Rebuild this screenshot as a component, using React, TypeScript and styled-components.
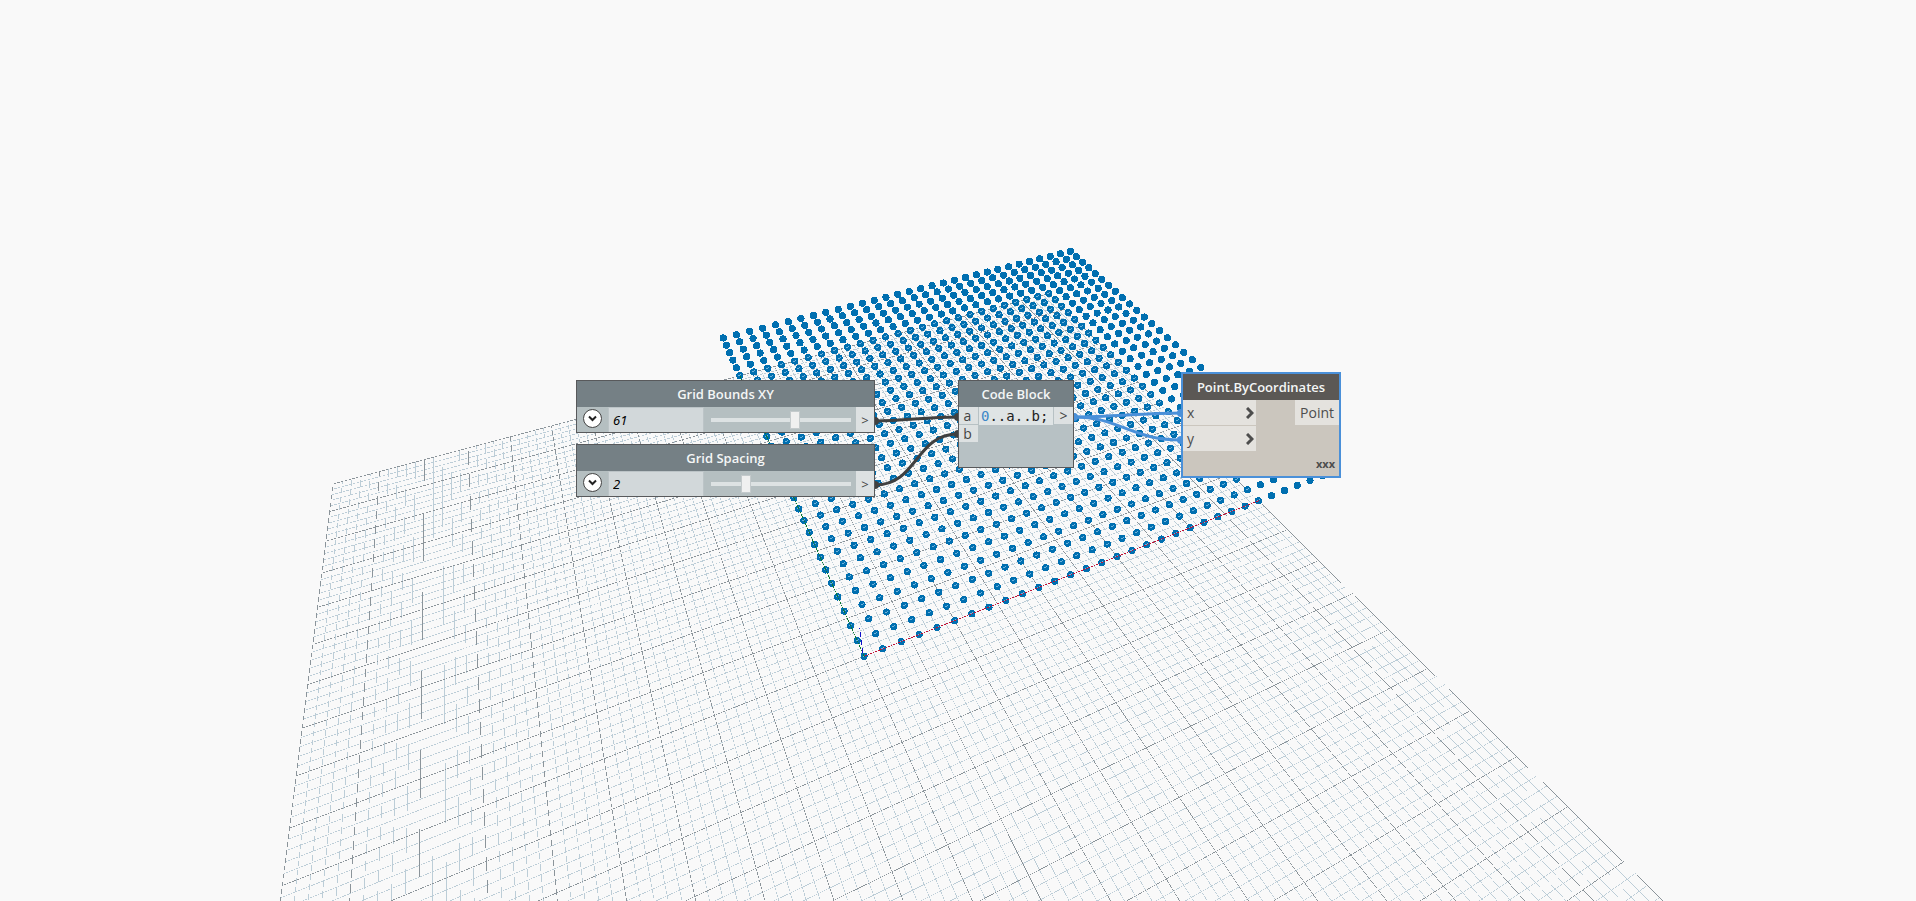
import React from 'react';
import styled, { createGlobalStyle, css } from 'styled-components';

const GlobalStyle = createGlobalStyle`
  * { box-sizing: border-box; }
  body {
    margin: 0;
    background: #f9f9f9;
    font-family: 'Open Sans', 'Noto Sans', sans-serif;
    overflow: hidden;
  }
`;

const Workspace = styled.main`
  position: relative;
  width: 100%;
  height: 100vh;
  overflow: hidden;
`;

const Scene = styled.svg`
  position: absolute;
  inset: 0;
  width: 100%;
  height: 100%;
`;

const Node = styled.section<{ $x: number; $y: number; $w: number; $selected?: boolean }>`
  position: absolute;
  left: ${p => p.$x}px;
  top: ${p => p.$y}px;
  width: ${p => p.$w}px;
  border: 1px solid #58595b;
  background: #b7c1c4;
  color: #333;
  font-size: 14px;
  ${p => p.$selected && css`
    border: 2px solid #4a90d9;
    background: #cbc6be;
  `}
`;

const Title = styled.h2<{ $selected?: boolean }>`
  margin: 0;
  height: 26px;
  line-height: 26px;
  text-align: center;
  font-size: 13px;
  font-weight: 600;
  color: #f4f6f6;
  background: ${p => (p.$selected ? '#5b5855' : '#758085')};
`;

const SliderRow = styled.div`
  display: grid;
  grid-template-columns: 31px 96px 1fr 18px;
  height: 25px;
  background: #b5bfc1;
`;

const Toggle = styled.button`
  width: 19px;
  height: 19px;
  margin: 2px 6px;
  padding: 0;
  display: grid;
  place-items: center;
  border: 1px solid #444;
  border-radius: 50%;
  background: #fff;
  color: #222;
`;

const ValueInput = styled.input`
  width: 100%;
  height: 25px;
  padding: 0 4px;
  border: 1px solid #bcc4c7;
  border-width: 1px 1px 0 1px;
  background: #d2d8da;
  font: italic 13px 'Noto Sans', sans-serif;
  color: #000;
`;

const Range = styled.input`
  appearance: none;
  margin: 0 5px 0 7px;
  height: 25px;
  background: transparent;
  &::-webkit-slider-runnable-track {
    height: 4px;
    background: #dde2e3;
  }
  &::-webkit-slider-thumb {
    appearance: none;
    width: 10px;
    height: 18px;
    margin-top: -7px;
    border: 1px solid #c4cacc;
    background: #f0f0f0;
  }
`;

const OutPort = styled.div`
  display: grid;
  place-items: center;
  background: #dde1e2;
  color: #444;
  font-size: 13px;
`;

const CodeBody = styled.div`
  display: grid;
  grid-template-columns: 19px 1fr 19px;
  column-gap: 1px;
  height: 60px;
  align-items: start;
`;

const PortList = styled.div`
  display: grid;
  row-gap: 1px;
`;

const CodePort = styled.div<{ $out?: boolean }>`
  height: 17px;
  padding-right: ${p => (p.$out ? 0 : 2)}px;
  line-height: 17px;
  text-align: center;
  background: #dde1e2;
  color: #444;
`;

const Code = styled.code`
  height: 18px;
  padding-left: 2px;
  background: #dfe4e5;
  font: 14px/18px 'DejaVu Sans Mono', monospace;
  color: #222;
`;

const Digit = styled.span`
  color: #3a87c8;
`;

const PointBody = styled.div`
  display: flex;
  justify-content: space-between;
`;

const InPorts = styled.div`
  display: grid;
  row-gap: 1px;
  width: 73px;
`;

const InPort = styled.div`
  display: flex;
  align-items: center;
  justify-content: space-between;
  height: 25px;
  padding: 0 2px 0 4px;
  background: #e4e2de;
  color: #4d4d4d;
`;

const PointOut = styled.div`
  height: 25px;
  line-height: 26px;
  padding: 0 5px;
  background: #e4e2de;
  color: #4d4d4d;
`;

const Lacing = styled.div`
  padding: 4px 4px 0;
  height: 25px;
  text-align: right;
  font-size: 11px;
  font-weight: 700;
  line-height: 18px;
  color: #4d4d4d;
`;

type Pt = [number, number];

// Ground-plane coordinates and the screen positions they project to.
const anchors: { world: Pt; screen: Pt }[] = [
  { world: [0, 0], screen: [863.6, 656.6] },
  { world: [50, 0], screen: [1258.3, 500.3] },
  { world: [0, 60], screen: [723.4, 338.2] },
  { world: [60, 60], screen: [1070.4, 251.2] },
  { world: [-50, 50], screen: [332.7, 484] },
  { world: [-50, 25], screen: [313.3, 644.3] },
  { world: [-50, 0], screen: [282, 885] },
  { world: [50, -15], screen: [1351.7, 594.3] },
  { world: [50, -30], screen: [1470.7, 710] },
  { world: [50, -45], screen: [1623.3, 862.3] },
  { world: [0, -10], screen: [902.3, 742.3] },
  { world: [0, -20], screen: [948.3, 845] },
];

function solve(m: number[][]): number[] {
  const n = m.length;
  for (let c = 0; c < n; c++) {
    let p = c;
    for (let r = c + 1; r < n; r++) if (Math.abs(m[r][c]) > Math.abs(m[p][c])) p = r;
    [m[c], m[p]] = [m[p], m[c]];
    for (let r = 0; r < n; r++) {
      if (r === c) continue;
      const f = m[r][c] / m[c][c];
      for (let k = c; k <= n; k++) m[r][k] -= f * m[c][k];
    }
  }
  return m.map((row, i) => row[n] / row[i]);
}

const WORLD = 50;
const SCREEN = 1000;

// Least-squares fit of the plane-to-screen projection through the anchors.
function fitCamera(): number[] {
  const rows = anchors.flatMap(({ world, screen }) => {
    const [x, y] = world.map(n => n / WORLD);
    const [u, v] = screen.map(n => n / SCREEN);
    return [
      [x, y, 1, 0, 0, 0, -u * x, -u * y, u],
      [0, 0, 0, x, y, 1, -v * x, -v * y, v],
    ];
  });
  const normal = Array.from({ length: 8 }, (_, i) =>
    Array.from({ length: 9 }, (_, j) => rows.reduce((sum, r) => sum + r[i] * r[j], 0)),
  );
  return solve(normal);
}

const camera = fitCamera();

const project = (wx: number, wy: number): Pt => {
  const [a, b, c, d, e, f, g, h] = camera;
  const x = wx / WORLD;
  const y = wy / WORLD;
  const w = (g * x + h * y + 1) / SCREEN;
  return [(a * x + b * y + c) / w, (d * x + e * y + f) / w];
};

const LINE_WIDTH = 0.6;
const MAX_PIXEL = 2400;

// Pixel runs of an unsmoothed thin line: a pixel is lit only where the
// line covers its centre, so slanted lines break into dashes.
function rasterise([x0, y0]: Pt, [x1, y1]: Pt): string {
  const steep = Math.abs(y1 - y0) > Math.abs(x1 - x0);
  let [a0, b0, a1, b1] = steep ? [y0, x0, y1, x1] : [x0, y0, x1, y1];
  if (a0 > a1) [a0, b0, a1, b1] = [a1, b1, a0, b0];
  const slope = (b1 - b0) / (a1 - a0);
  const reach = (LINE_WIDTH * Math.sqrt(1 + slope * slope)) / 2;
  const last = Math.min(Math.floor(a1), MAX_PIXEL);
  let out = '';
  let start = 0;
  let lane = -1;
  const flush = (end: number) => {
    if (lane >= 0 && end > start) {
      out += steep ? `M${lane}.5 ${start}V${end}` : `M${start} ${lane}.5H${end}`;
    }
  };
  for (let a = Math.max(0, Math.round(a0)); a <= last; a++) {
    const b = b0 + slope * (a + 0.5 - a0);
    const cell = Math.floor(b);
    const lit = Math.abs(b - cell - 0.5) <= reach ? cell : -1;
    if (lit !== lane) {
      flush(a);
      start = a;
      lane = lit;
    }
  }
  flush(last + 1);
  return out;
}

const line = (a: Pt, b: Pt) => rasterise(project(...a), project(...b));

const HALF = 50;
const steps = Array.from({ length: 2 * HALF + 1 }, (_, i) => i - HALF);
const gridPath = (list: number[]) =>
  list.map(i => line([i, -HALF], [i, HALF]) + line([-HALF, i], [HALF, i])).join('');
const minor = gridPath(steps.filter(i => i % 5 !== 0));
const major = gridPath(steps.filter(i => i % 5 === 0));
const xAxis = line([0, 0], [HALF, 0]);
const yAxis = line([0, 0], [0, HALF]);
const zAxis = rasterise([863, 655], [859.7, 628]);

const range = Array.from({ length: 31 }, (_, i) => i * 2);
const points = range.flatMap(x => range.map(y => ({ x, y, at: project(x, y) })));
const onGrid = points.filter(p => p.x <= HALF && p.y <= HALF);
const glints = onGrid
  .map(({ at }) => `M${Math.floor(at[0]) - 1} ${Math.floor(at[1])}h2v-1h1v1h-1v1h-2z`)
  .join('');

function Background() {
  return (
    <Scene aria-hidden="true">
      <g shapeRendering="crispEdges" fill="none">
        <path d={minor} stroke="#bccdd7" />
        <path d={major} stroke="#8b949a" />
      </g>
      <g fill="#006fb0" shapeRendering="crispEdges">
        {points.map(({ x, y, at }) => (
          <circle key={`${x}-${y}`} cx={at[0]} cy={at[1]} r="3.6" />
        ))}
      </g>
      <path d={glints} fill="#6fb3dc" shapeRendering="crispEdges" />
      <g shapeRendering="crispEdges" fill="none">
        <path d={xAxis} stroke="#c01036" />
        <path d={yAxis} stroke="#0b7a2e" />
        <path d={zAxis} stroke="#1010c8" />
      </g>
      <g fill="none" stroke="#404040" strokeWidth="3">
        <path d="M875 421C905 421 925 417 958 417" />
        <path d="M875 485C918 485 915 434 958 434" />
      </g>
      <g fill="#404040">
        <circle cx="875" cy="421" r="4" />
        <circle cx="875" cy="485" r="4" />
        <circle cx="958" cy="417" r="4" />
        <circle cx="958" cy="434" r="4" />
      </g>
      <g fill="none" stroke="#4a90d9" strokeWidth="3">
        <path d="M1074 417C1110 417 1145 413 1182 413" />
        <path d="M1074 417C1120 417 1130 440 1182 440" />
      </g>
      <g fill="#4a90d9">
        <circle cx="1074" cy="417" r="4" />
        <circle cx="1181" cy="413" r="4" />
        <circle cx="1181" cy="440" r="4" />
      </g>
    </Scene>
  );
}

function DownMark() {
  return (
    <svg width="9" height="7" viewBox="0 0 9 7" fill="none" stroke="currentColor" strokeWidth="2" aria-hidden="true">
      <path d="M1 1.5L4.5 5L8 1.5" />
    </svg>
  );
}

function RightMark() {
  return (
    <svg width="8" height="12" viewBox="0 0 8 12" fill="none" stroke="currentColor" strokeWidth="3" aria-hidden="true">
      <path d="M1 1L6 6L1 11" />
    </svg>
  );
}

interface SliderNodeProps {
  title: string;
  x: number;
  y: number;
  value: number;
  position: number;
}

function SliderNode({ title, x, y, value, position }: SliderNodeProps) {
  return (
    <Node $x={x} $y={y} $w={299}>
      <Title>{title}</Title>
      <SliderRow>
        <Toggle aria-label={`${title} settings`}>
          <DownMark />
        </Toggle>
        <ValueInput aria-label={`${title} value`} defaultValue={value} />
        <Range type="range" aria-label={title} min={0} max={100} defaultValue={position} />
        <OutPort>&gt;</OutPort>
      </SliderRow>
    </Node>
  );
}

export default function App() {
  return (
    <>
      <GlobalStyle />
      <Workspace>
        <Background />
        <SliderNode title="Grid Bounds XY" x={576} y={380} value={61} position={61} />
        <SliderNode title="Grid Spacing" x={576} y={444} value={2} position={23} />
        <Node $x={958} $y={380} $w={116}>
          <Title>Code Block</Title>
          <CodeBody>
            <PortList>
              <CodePort>a</CodePort>
              <CodePort>b</CodePort>
            </PortList>
            <Code><Digit>0</Digit>..a..b;</Code>
            <CodePort $out>&gt;</CodePort>
          </CodeBody>
        </Node>
        <Node $x={1181} $y={372} $w={160} $selected>
          <Title $selected>Point.ByCoordinates</Title>
          <PointBody>
            <InPorts>
              <InPort>x<RightMark /></InPort>
              <InPort>y<RightMark /></InPort>
            </InPorts>
            <PointOut>Point</PointOut>
          </PointBody>
          <Lacing>xxx</Lacing>
        </Node>
      </Workspace>
    </>
  );
}
